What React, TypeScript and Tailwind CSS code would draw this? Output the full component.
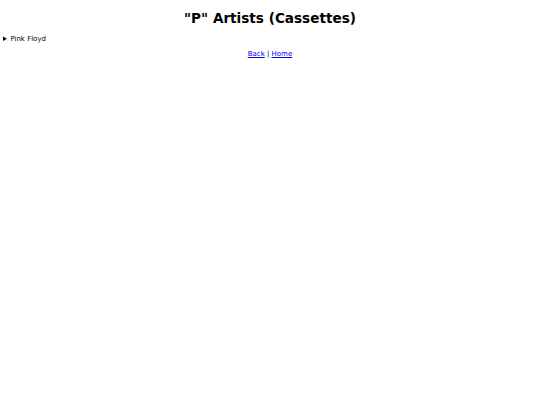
export default function App() {
  return (
    <div className="min-h-[405px] bg-white text-black text-[7px] font-['DejaVu_Sans',sans-serif]">
      <h1 className="text-center text-[13.6px] font-bold pt-[8px]">"P" Artists (Cassettes)</h1>
      <details className="mt-[6px]">
        <summary className="cursor-pointer pl-[3px]">Pink Floyd</summary>
      </details>
      <p className="text-center mt-[4px]">
        <a href="#" className="text-[#0000ee] underline">Back</a> | <a href="#" className="text-[#0000ee] underline">Home</a>
      </p>
    </div>
  );
}
